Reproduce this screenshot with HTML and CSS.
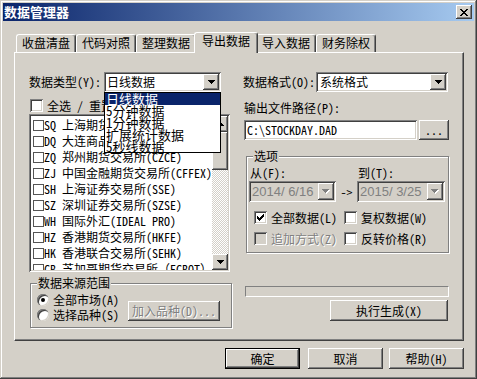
FILE: index.html
```html
<!DOCTYPE html>
<html lang="zh-CN">
<head>
    <meta charset="UTF-8">
    <title>数据管理器</title>
    <link rel="stylesheet" href="styles.css">
</head>
<body>
<div class="window">
    <div class="titlebar">
        <span class="title">数据管理器</span>
        <button class="btn close">
            <svg width="8" height="7" viewBox="0 0 8 7" shape-rendering="crispEdges"><path d="M0 0h2v1H0zM6 0h2v1H6zM1 1h2v1H1zM5 1h2v1H5zM2 2h4v1H2zM3 3h2v1H3zM2 4h4v1H2zM1 5h2v1H1zM5 5h2v1H5zM0 6h2v1H0zM6 6h2v1H6z" fill="#000"/></svg>
        </button>
    </div>
    <div class="client">
        <div class="tabs">
            <div class="tab">收盘清盘</div>
            <div class="tab">代码对照</div>
            <div class="tab">整理数据</div>
            <div class="tab active">导出数据</div>
            <div class="tab">导入数据</div>
            <div class="tab">财务除权</div>
        </div>
        <div class="panel">
            <!-- left column -->
            <div class="col">
                <div class="field-row">
                    <span class="type-label">数据类型(Y):</span>
                    <div class="combo type-combo">
                        <span>日线数据</span>
                        <span class="btn combo-btn"><svg width="7" height="4" viewBox="0 0 7 4" shape-rendering="crispEdges"><path d="M0 0h7v1H0zM1 1h5v1H1zM2 2h3v1H2zM3 3h1v1H3z" fill="#000"/></svg></span>
                        <ul class="dropdown">
                            <li class="selected">日线数据</li>
                            <li>5分钟数据</li>
                            <li>1分钟数据</li>
                            <li>扩展统计数据</li>
                            <li>5秒线数据</li>
                        </ul>
                    </div>
                </div>
                <div class="select-all">
                    <span class="check"></span>
                    <span>全选 / 重置</span>
                </div>
                <div class="listbox">
                    <div class="list-items">
                        <div class="list-row"><span class="list-check"></span>SQ 上海期货交易所(SHFE)</div>
                        <div class="list-row"><span class="list-check"></span>DQ 大连商品交易所(DCE)</div>
                        <div class="list-row"><span class="list-check"></span>ZQ 郑州期货交易所(CZCE)</div>
                        <div class="list-row"><span class="list-check"></span>ZJ 中国金融期货交易所(CFFEX)</div>
                        <div class="list-row"><span class="list-check"></span>SH 上海证券交易所(SSE)</div>
                        <div class="list-row"><span class="list-check"></span>SZ 深圳证券交易所(SZSE)</div>
                        <div class="list-row"><span class="list-check"></span>WH 国际外汇(IDEAL PRO)</div>
                        <div class="list-row"><span class="list-check"></span>HZ 香港期货交易所(HKFE)</div>
                        <div class="list-row"><span class="list-check"></span>HK 香港联合交易所(SEHK)</div>
                        <div class="list-row"><span class="list-check"></span>CB 芝加哥期货交易所（ECBOT）</div>
                    </div>
                    <div class="scrollbar">
                        <span class="btn sb-btn"><svg width="7" height="4" viewBox="0 0 7 4" shape-rendering="crispEdges"><path d="M3 0h1v1H3zM2 1h3v1H2zM1 2h5v1H1zM0 3h7v1H0z" fill="#000"/></svg></span>
                        <span class="btn sb-thumb"></span>
                        <span class="sb-track"></span>
                        <span class="btn sb-btn"><svg width="7" height="4" viewBox="0 0 7 4" shape-rendering="crispEdges"><path d="M0 0h7v1H0zM1 1h5v1H1zM2 2h3v1H2zM3 3h1v1H3z" fill="#000"/></svg></span>
                    </div>
                </div>
                <div class="group source-group">
                    <span class="group-title">数据来源范围</span>
                    <div class="radio-list">
                        <div class="radio-row"><span class="radio on"></span>全部市场(A)</div>
                        <div class="radio-row"><span class="radio"></span>选择品种(S)</div>
                    </div>
                    <button class="btn add-btn disabled">加入品种(D)...</button>
                </div>
            </div>

            <!-- right column -->
            <div class="col">
                <div class="field-row">
                    <span class="format-label">数据格式(O):</span>
                    <div class="combo format-combo">
                        <span>系统格式</span>
                        <span class="btn combo-btn"><svg width="7" height="4" viewBox="0 0 7 4" shape-rendering="crispEdges"><path d="M0 0h7v1H0zM1 1h5v1H1zM2 2h3v1H2zM3 3h1v1H3z" fill="#000"/></svg></span>
                    </div>
                </div>
                <div class="path-label">输出文件路径(P):</div>
                <div class="path-row">
                    <div class="input">C:\STOCKDAY.DAD</div>
                    <button class="btn browse-btn">...</button>
                </div>
                <div class="group options-group">
                    <span class="group-title">选项</span>
                    <div class="date-grid">
                        <span class="date-label">从(F):</span>
                        <span></span>
                        <span class="date-label">到(T):</span>
                        <div class="datepick">2014/ 6/16<span class="btn date-btn"><svg width="8" height="5" viewBox="0 0 8 5" shape-rendering="crispEdges"><path d="M1 1h7v1H1zM2 2h5v1H2zM3 3h3v1H3zM4 4h1v1H4z" fill="#fff"/><path d="M0 0h7v1H0zM1 1h5v1H1zM2 2h3v1H2zM3 3h1v1H3z" fill="#808080"/></svg></span></div>
                        <span class="arrow-text">-&gt;</span>
                        <div class="datepick">2015/ 3/25<span class="btn date-btn"><svg width="8" height="5" viewBox="0 0 8 5" shape-rendering="crispEdges"><path d="M1 1h7v1H1zM2 2h5v1H2zM3 3h3v1H3zM4 4h1v1H4z" fill="#fff"/><path d="M0 0h7v1H0zM1 1h5v1H1zM2 2h3v1H2zM3 3h1v1H3z" fill="#808080"/></svg></span></div>
                    </div>
                    <div class="opt-checks">
                        <div class="opt-check">
                            <span class="check"><svg width="7" height="7" viewBox="0 0 7 7" shape-rendering="crispEdges"><path d="M6 0h1v1H6zM5 1h2v1H5zM0 2h1v1H0zM4 2h3v1H4zM0 3h2v1H0zM3 3h3v1H3zM0 4h5v1H0zM1 5h3v1H1zM2 6h1v1H2z" fill="#000"/></svg></span>
                            <span>全部数据(L)</span>
                        </div>
                        <div class="opt-check"><span class="check"></span><span>复权数据(W)</span></div>
                        <div class="opt-check"><span class="check off"></span><span class="disabled">追加方式(Z)</span></div>
                        <div class="opt-check"><span class="check"></span><span>反转价格(R)</span></div>
                    </div>
                </div>
                <div class="progress"></div>
                <button class="btn run-btn">执行生成(X)</button>
            </div>
        </div>
        <div class="footer">
            <button class="btn dlg-btn default">确定</button>
            <button class="btn dlg-btn cancel">取消</button>
            <button class="btn dlg-btn">帮助(H)</button>
        </div>
    </div>
</div>
</body>
</html>
```

FILE: styles.css
```css
body {
    margin: 0;
    padding: 0;
    background-color: #d4d0c8;
}
.window {
    width: 477px;
    height: 379px;
    box-sizing: border-box;
    padding: 3px;
    overflow: hidden;
    background-color: #d4d0c8;
    box-shadow: inset -1px -1px #404040, inset 1px 1px #d4d0c8, inset -2px -2px #808080, inset 2px 2px #fff;
    font-family: "Noto Sans Mono CJK SC", "Noto Sans CJK SC", sans-serif;
    font-size: 12px;
    line-height: 14px;
    color: #000;
}
.titlebar {
    height: 18px;
    display: flex;
    align-items: center;
    justify-content: space-between;
    padding: 0 2px 0 1px;
    background: linear-gradient(90deg, #0a246a, #a6caf0);
}
.title {
    color: #fff;
    font-family: "Noto Sans CJK SC", sans-serif;
    font-weight: bold;
    font-size: 13px;
    line-height: 18px;
}

/* classic 3d buttons */
.btn {
    font: inherit;
    color: #000;
    background-color: #d4d0c8;
    border: none;
    padding: 0;
    box-sizing: border-box;
    display: flex;
    align-items: center;
    justify-content: center;
    box-shadow: inset -1px -1px #404040, inset 1px 1px #fff, inset -2px -2px #808080, inset 2px 2px #d4d0c8;
}
.close {
    width: 16px;
    height: 14px;
}
.disabled {
    color: #808080;
    text-shadow: 1px 1px #fff;
}

.client {
    padding: 0 10px 0 11px;
}
.tabs {
    display: flex;
    align-items: flex-end;
    height: 20px;
    margin-top: 11px;
    padding-left: 2px;
    position: relative;
    z-index: 1;
}
.tab {
    width: 60px;
    height: 18px;
    box-sizing: border-box;
    border-top: 1px solid #fff;
    border-left: 1px solid #fff;
    border-right: 1px solid #404040;
    border-radius: 3px 3px 0 0;
    box-shadow: inset -1px 0 #808080;
    text-align: center;
    line-height: 16px;
}
.tab.active {
    width: 64px;
    height: 21px;
    margin: 0 -2px -1px;
    position: relative;
    z-index: 2;
    background-color: #d4d0c8;
}

.panel {
    width: 450px;
    height: 289px;
    box-sizing: border-box;
    border: 1px solid;
    border-color: #fff #404040 #404040 #fff;
    box-shadow: inset -1px -1px #808080;
    display: grid;
    grid-template-columns: 202px 206px;
    column-gap: 12px;
    align-content: start;
    padding: 19px 0 0 14px;
}
.col {
    display: flex;
    flex-direction: column;
    align-items: flex-start;
}
.field-row {
    display: flex;
    align-items: center;
    height: 20px;
}
.type-label {
    width: 75px;
}
.format-label {
    width: 73px;
}

/* sunken fields */
.combo, .input, .listbox, .datepick {
    box-sizing: border-box;
    background-color: #fff;
    box-shadow: inset 1px 1px #808080, inset -1px -1px #fff, inset 2px 2px #404040, inset -2px -2px #d4d0c8;
}
.combo {
    position: relative;
    height: 20px;
    display: flex;
    align-items: center;
    padding-left: 3px;
}
.type-combo {
    width: 117px;
}
.format-combo {
    width: 132px;
    padding-left: 4px;
}
.combo-btn {
    position: absolute;
    right: 2px;
    top: 2px;
    width: 16px;
    height: 16px;
}
.dropdown {
    position: absolute;
    left: 0;
    top: 20px;
    width: 117px;
    height: 61px;
    box-sizing: border-box;
    margin: 0;
    padding: 0;
    list-style: none;
    border: 1px solid #000;
    background-color: #fff;
    z-index: 5;
    font-size: 13px;
    line-height: 12px;
}
.dropdown li {
    height: 12px;
    padding-left: 1px;
    white-space: nowrap;
}
.dropdown li.selected {
    background-color: #0a246a;
    color: #fff;
}

.check {
    width: 13px;
    height: 13px;
    flex: none;
    box-sizing: border-box;
    background-color: #fff;
    box-shadow: inset 1px 1px #808080, inset -1px -1px #fff, inset 2px 2px #404040, inset -2px -2px #d4d0c8;
    display: flex;
    align-items: center;
    justify-content: center;
}
.check.off {
    background-color: #d4d0c8;
}
.select-all {
    display: flex;
    align-items: center;
    gap: 4px;
    height: 13px;
    margin-top: 7px;
    margin-left: 1px;
}

.listbox {
    width: 201px;
    height: 158px;
    margin-top: 2px;
    padding: 2px;
    display: flex;
}
.list-items {
    flex: 1;
    overflow: hidden;
    padding: 1px 0 0 2px;
}
.list-row {
    height: 16px;
    display: flex;
    align-items: center;
    white-space: pre;
}
.list-check {
    width: 11px;
    height: 11px;
    flex: none;
    box-sizing: border-box;
    border: 1px solid #555;
}
.scrollbar {
    width: 16px;
    flex: none;
    display: flex;
    flex-direction: column;
}
.sb-btn {
    height: 16px;
    flex: none;
}
.sb-thumb {
    height: 38px;
    flex: none;
}
.sb-track {
    flex: 1;
    background: conic-gradient(#d4d0c8 25%, #fff 0 50%, #d4d0c8 0 75%, #fff 0) 0 0 / 2px 2px;
}

/* etched group boxes */
.group {
    position: relative;
    box-sizing: border-box;
    border: 1px solid #808080;
    box-shadow: inset 1px 1px #fff, 1px 1px #fff;
}
.group-title {
    position: absolute;
    top: -7px;
    left: 6px;
    padding: 0 1px;
    line-height: 12px;
    background-color: #d4d0c8;
}
.source-group {
    width: 202px;
    height: 45px;
    margin-top: 11px;
    margin-left: 1px;
    padding: 8px 11px 0 6px;
    display: flex;
    justify-content: space-between;
    align-items: flex-start;
}
.radio-list {
    display: flex;
    flex-direction: column;
}
.radio-row {
    height: 15px;
    display: flex;
    align-items: center;
    gap: 4px;
}
.radio {
    width: 12px;
    height: 12px;
    border-radius: 50%;
    background-color: #fff;
    box-shadow: inset 1px 1px #808080, inset 2px 2px #404040, inset -1px -1px #d4d0c8;
    display: flex;
    align-items: center;
    justify-content: center;
}
.radio.on::after {
    content: "";
    width: 4px;
    height: 4px;
    border-radius: 50%;
    background-color: #000;
}
.add-btn {
    width: 92px;
    height: 20px;
    margin-top: 9px;
    color: #808080;
}

.path-label {
    margin-top: 10px;
    padding-left: 1px;
    line-height: 12px;
}
.path-row {
    display: flex;
    gap: 2px;
    margin-top: 6px;
    padding-left: 1px;
}
.input {
    width: 173px;
    height: 20px;
    padding-left: 3px;
    display: flex;
    align-items: center;
}
.browse-btn {
    width: 30px;
    height: 20px;
}

.options-group {
    width: 203px;
    height: 97px;
    margin-top: 16px;
    margin-left: 3px;
    padding: 10px 0 0 2px;
}
.date-grid {
    display: grid;
    grid-template-columns: 87px 21px 88px;
    grid-template-rows: 12px 21px;
    row-gap: 2px;
}
.date-label {
    line-height: 12px;
    padding-left: 1px;
}
.datepick {
    position: relative;
    height: 21px;
    padding-left: 3px;
    display: flex;
    align-items: center;
    background-color: #d4d0c8;
    color: #808080;
    font-family: "Liberation Sans", sans-serif;
    font-size: 13px;
}
.date-btn {
    position: absolute;
    right: 2px;
    top: 2px;
    width: 16px;
    height: 17px;
}
.arrow-text {
    display: flex;
    align-items: center;
    justify-content: center;
}
.opt-checks {
    display: grid;
    grid-template-columns: 90px auto;
    row-gap: 8px;
    margin-top: 9px;
    padding-left: 5px;
}
.opt-check {
    display: flex;
    align-items: center;
    gap: 4px;
    height: 13px;
}

.progress {
    width: 204px;
    height: 11px;
    margin-top: 33px;
    margin-left: 2px;
    box-sizing: border-box;
    border: 1px solid;
    border-color: #808080 #fff #fff #808080;
}
.run-btn {
    width: 118px;
    height: 21px;
    margin-top: 3px;
    margin-left: 87px;
}

.footer {
    display: flex;
    justify-content: flex-end;
    margin-top: 7px;
}
.dlg-btn {
    width: 75px;
    height: 21px;
}
.dlg-btn.default {
    border: 1px solid #000;
    margin-right: 8px;
}
.dlg-btn.cancel {
    margin-right: 6px;
}
```
